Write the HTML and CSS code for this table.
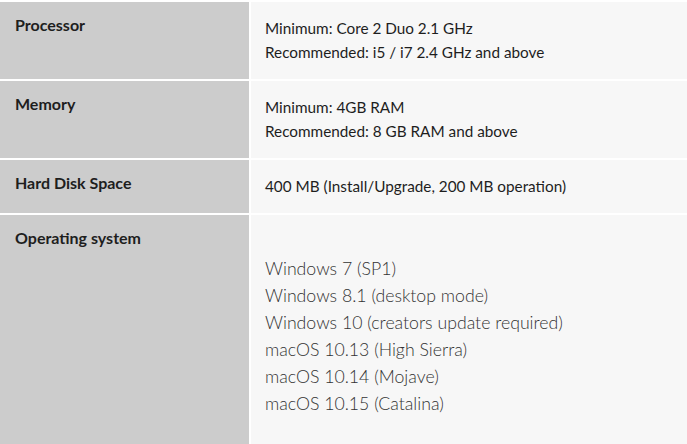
FILE: index.html
```html
<!DOCTYPE html>
<html lang="en">
<head>
  <meta charset="UTF-8" />
  <title>System Requirements</title>
  <meta name="viewport" content="width=device-width, initial-scale=1" />
  <link rel="stylesheet" href="styles.css">
</head>
<body>
  <div class="specs">
    <div class="spec-label">Processor</div>
    <div class="spec-value">
      Minimum: Core 2 Duo 2.1 GHz<br>
      Recommended: i5 / i7 2.4 GHz and above
    </div>

    <div class="spec-label">Memory</div>
    <div class="spec-value">
      Minimum: 4GB RAM<br>
      Recommended: 8 GB RAM and above
    </div>

    <div class="spec-label">Hard Disk Space</div>
    <div class="spec-value">400 MB (Install/Upgrade, 200 MB operation)</div>

    <div class="spec-label">Operating system</div>
    <div class="spec-value">
      <ul class="os-list">
        <li>Windows 7 (SP1)</li>
        <li>Windows 8.1 (desktop mode)</li>
        <li>Windows 10 (creators update required)</li>
        <li>macOS 10.13 (High Sierra)</li>
        <li>macOS 10.14 (Mojave)</li>
        <li>macOS 10.15 (Catalina)</li>
      </ul>
    </div>
  </div>
</body>
</html>
```

FILE: styles.css
```css
body {
  margin: 0;
  background: #fff;
  font-family: 'Lato', 'Open Sans', Arial, sans-serif;
  color: #222;
}
.specs {
  display: grid;
  grid-template-columns: 249px 1fr;
  grid-template-rows: auto auto auto 1fr;
  gap: 2px;
  padding-top: 2px;
  min-height: 100vh;
  box-sizing: border-box;
}
.spec-label {
  background: #cccccc;
  padding: 11px 15px;
  font-size: 16px;
  font-weight: 700;
  line-height: 24px;
  color: #1e1e1e;
}
.spec-value {
  background: #f7f7f7;
  padding: 14px 14px 15px 14px;
  font-size: 15.3px;
  line-height: 24px;
  color: #1e1e1e;
}
.os-list {
  list-style: none;
  margin: 26px 0 0 0;
  padding: 0;
  font-size: 17.7px;
  font-weight: 300;
  line-height: 27px;
  color: #333;
}
```
